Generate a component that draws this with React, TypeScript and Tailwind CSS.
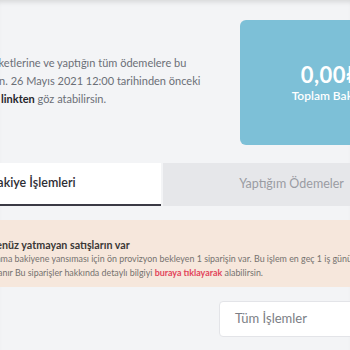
export default function App() {
  return (
    <div className="h-[350px] w-[350px] overflow-hidden bg-[#f3f4f6] font-['Lato',sans-serif] shadow-[inset_0_5px_5px_-3px_rgba(0,0,0,0.12)]">
      <div className="-ml-[96px] w-[516px] pt-[20px]">
        <div className="flex h-[125px] items-center justify-between">
          <div className="ml-[3px] whitespace-nowrap pb-[4px] text-[11px] leading-[18px] text-[#6b6f76]">
            <div>Bu sayfada satış paketlerine ve yaptığın tüm ödemelere bu</div>
            <div>buradan ulaşabilirsin. 26 Mayıs 2021 12:00 tarihinden önceki</div>
            <div>
              ödemelerine ise bu <span className="font-bold text-[#26262b]">linkten</span> göz atabilirsin.
            </div>
          </div>
          <div className="flex h-[125px] w-[180px] flex-col items-center justify-center rounded-[6px] bg-[#7dc0d7] text-white">
            <div className="text-[22px] font-bold leading-none tracking-[0.5px]">0,00₺</div>
            <div className="mt-[4px] text-[12px] font-semibold leading-none">Toplam Bakiye</div>
          </div>
        </div>

        <div className="mt-[18px] flex h-[43px] gap-[2px]">
          <div className="flex flex-1 items-center justify-center border-b-2 border-[#3a3a44] bg-white text-[12.5px] font-semibold text-[#2d2d33]">
            Bakiye İşlemleri
          </div>
          <div className="flex flex-1 items-center justify-center bg-[#e6e7ea] text-[12.5px] text-[#9a9ca3]">
            Yaptığım Ödemeler
          </div>
        </div>

        <div className="mt-[14px] h-[67px] whitespace-nowrap bg-[#f6e7dc] pl-[40px] pt-[18px] text-[8.9px] leading-[14px] text-[#75726f]">
          <div className="text-[10.7px] font-bold text-[#3a3836]">Bakiyene henüz yatmayan satışların var</div>
          <div>Ödemenin alınma bakiyene yansıması için ön provizyon bekleyen 1 siparişin var. Bu işlem en geç 1 iş günü</div>
          <div>
            içinde tamamlanır Bu siparişler hakkında detaylı bilgiyi{" "}
            <span className="font-bold text-[#e2445a]">buraya tıklayarak</span> alabilirsin.
          </div>
        </div>

        <div className="mt-[14px] flex justify-end">
          <div className="flex h-[36px] w-[201px] items-center rounded-[4px] border border-[#e3e4e8] bg-white px-[15px] text-[13px] text-[#7b7e85]">
            Tüm İşlemler
          </div>
        </div>
      </div>
    </div>
  );
}
